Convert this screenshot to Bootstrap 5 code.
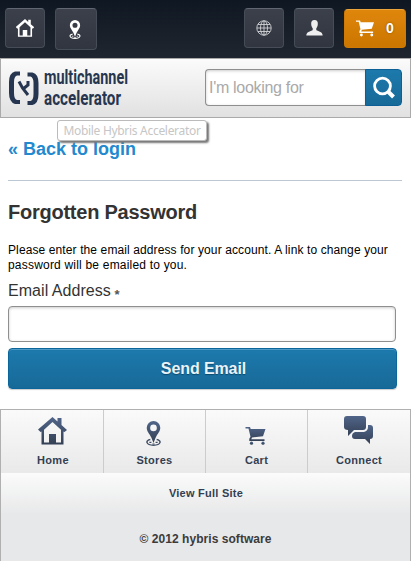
<!DOCTYPE html>
<html lang="en">
<head>
<meta charset="utf-8">
<meta name="viewport" content="width=device-width, initial-scale=1">
<title>Forgotten Password</title>
<link href="https://cdn.jsdelivr.net/npm/bootstrap@5.3.0/dist/css/bootstrap.min.css" rel="stylesheet">
<style>
body{font-family:"Liberation Sans",Arial,sans-serif;color:#333;background:#fff;height:561px;overflow:hidden}
svg{display:block;flex:none}
.topbar{height:58px;padding:8px 5px 0;background:linear-gradient(#0f1722,#20262f)}
.tools-end{gap:10px}
.tool{width:40px;height:40px;padding:0;border:1px solid #474d58;border-top-color:#626873;border-radius:4px;background:linear-gradient(#3b404b,#30353f);display:flex;align-items:center;justify-content:center}
.tool-lg{width:42px;height:42px;margin-left:10px;padding-right:2px}
.tool-cart{width:62px;height:39px;margin-top:1px;border-color:#cf7a05;border-top-color:#eda43b;background:linear-gradient(#df860c,#cb7600);color:#fff;font-weight:700;font-size:14px;gap:12px;text-shadow:0 0 2px #7a4700}
.brandbar{height:60px;border:1px solid #aaa;background:linear-gradient(#fbfbfb,#e1e1e1);padding:10px 8px 0 8px;position:relative}
.logo{overflow:visible;margin-top:-3px}
.search{width:197px;height:37px}
.search .form-control{border:1px solid #8f8f8f;border-right:0;border-radius:4px 0 0 4px;padding:0 3px;font-size:16px;letter-spacing:-.3px;box-shadow:inset 0 1px 3px #ccc}
.search .form-control::placeholder{color:#a9a9a9}
.search .btn{width:37px;padding:0 0 0 6px;border:1px solid #0c6095;border-radius:0 4px 4px 0;background:linear-gradient(#1d79ac,#176a98)}
.tip{position:absolute;left:56px;top:61px;width:150px;height:21px;border:1px solid #bbb;border-radius:3px;background:#fff;box-shadow:2px 2px 2px #777;color:#c6c6c6;font:12px/19px "Noto Sans",sans-serif;letter-spacing:-.3px;text-align:center;white-space:nowrap;z-index:2}
.back{font-size:18px;line-height:22px;font-weight:700;color:#2389cf;text-decoration:none}
.page{height:291px;padding:20px 8px 0}
.divider{border-top:1px solid #bcc7d3;margin:20px 1px 0 0;width:394px}
h1{font-size:20px;line-height:24px;font-weight:700;margin:19px 0 0;letter-spacing:-.24px}
.intro{font-size:12px;line-height:15px;color:#000;margin:19px 0 0;white-space:nowrap;letter-spacing:.11px}
.intro span{letter-spacing:.2px}
.field-label{font-size:16px;line-height:20px;margin:8px 0 0;display:block;letter-spacing:.05px}
.field-label span{font-size:13px;font-weight:700;color:#555;margin-left:-1px;position:relative;top:3px}
.email{width:388px;height:36px;margin-top:4px;padding:0 8px;border:1px solid #8f8f8f;border-radius:4px;box-shadow:inset 0 1px 3px #ccc}
.send{display:block;width:389px;height:41px;margin-top:6px;border:1px solid #0c659b;border-radius:4px;background:linear-gradient(#1d79ac,#176a98);box-shadow:inset 0 1px #4d9bc6,0 1px 1px #ccc;color:#e9f3f8;font-weight:700;font-size:16px;line-height:20px;letter-spacing:-.1px;padding:0 0 0 2px;text-shadow:0 1px 1px #0c496c}
.foot{height:152px;border:1px solid #b0b0b0;border-bottom:0;background:#e7e8ea;font-size:11px;font-weight:700}
.foot-tabs{height:63px;background:linear-gradient(#fafafa,#e9e9e9)}
.foot-tabs a{flex:0 0 102px;border-right:1px solid #ccc;color:#333f52;text-decoration:none;letter-spacing:.3px}
.foot-tabs a:first-child{flex-basis:103px;padding-left:2px}
.foot-tabs a:last-child{border-right:0}
.pic{height:43px;display:flex;justify-content:center;padding-top:5px}
.pic-left{padding-right:2px}
.foot-tabs small{font-size:11px;line-height:15px}
.full{height:40px;line-height:40px;background:linear-gradient(#fbfbfb,#e8e9ea);color:#333f52;letter-spacing:.25px;padding-left:1px}
.copy{line-height:16px;padding-top:18px;font-size:12px;letter-spacing:.05px;color:#3b3b3b}
</style>
<script src="https://cdn.jsdelivr.net/npm/bootstrap@5.3.0/dist/js/bootstrap.bundle.min.js"></script>
</head>
<body>
<svg width="0" height="0" class="position-absolute" aria-hidden="true">
<defs>
<linearGradient id="ink" x1="0" y1="0" x2="0" y2="1"><stop offset="0" stop-color="#50658a"/><stop offset="1" stop-color="#344054"/></linearGradient>
<symbol id="house" viewBox="0 0 28 28"><path fill-rule="evenodd" d="M14 0L19 4.500V1H23V8L28.500 13L26 15L25 14.500V27.500H3V14.500L2 15L-.5 12.500ZM14 5L5.500 12.800V25.500H10.500V17H17.500V25.500H22.500V12.800Z"/></symbol>
<symbol id="pin" viewBox="0 0 14 24"><path fill-rule="evenodd" d="M7 0A6.500 6.500 0 0 0 .5 6.500C.5 10 3 12 5 16L7 21L9 16C11 12 13.500 10 13.500 6.500A6.500 6.500 0 0 0 7 0ZM7 3.400A3.200 3.200 0 1 1 7 9.800A3.200 3.200 0 0 1 7 3.400Z"/><path d="M4 17.800C-1 18.500-.5 23.200 7 23.200S15 18.500 10 17.800" fill="none" stroke="currentColor" stroke-width="1.400"/><path d="M3 20.500H5M9 20.500H11M6 22H8" stroke="currentColor"/></symbol>
<symbol id="trolley" viewBox="0 0 20 18"><path d="M0 0H4.500L5.200 2H20L17.500 9.300L6.500 10.500L5.800 12.300H19V14H3.800V11.800L5 9.800L3 1.600H0Z"/><circle cx="6" cy="16.200" r="1.600"/><circle cx="17.500" cy="16.200" r="1.600"/></symbol>
</defs></svg>
<header class="topbar d-flex align-items-start">
<a class="tool" href="#" aria-label="Home"><svg width="18" height="18" fill="#fff"><use href="#house"/></svg></a>
<a class="tool tool-lg" href="#" aria-label="Stores"><svg width="12" height="19" fill="#fff" color="#fff"><use href="#pin"/></svg></a>
<div class="tools-end d-flex ms-auto">
<a class="tool" href="#" aria-label="Language"><svg width="16" height="16" viewBox="0 0 16 16" fill="none" stroke="#d0d1d4" stroke-width=".9"><circle cx="8" cy="8" r="7.200"/><ellipse cx="8" cy="8" rx="3.500" ry="7.200"/><path d="M8 1V15M1 8H15M2 4.500H14M2 11.500H14"/></svg></a>
<a class="tool" href="#" aria-label="Account"><svg width="17" height="16" viewBox="0 0 17 16" fill="#eee"><path d="M8.500 0C5.800 0 5 2 5.200 4.200C5.300 6.500 6.200 7.500 6.700 8.300V10C5.500 11.200 .4 11.500 .3 15.500H16.700C16.600 11.500 11.500 11.200 10.300 10V8.300C10.800 7.500 11.700 6.500 11.800 4.200C12 2 11.200 0 8.500 0Z"/></svg></a>
<a class="tool tool-cart text-decoration-none" href="#"><svg width="18" height="17" fill="#fff"><use href="#trolley"/></svg><span>0</span></a>
</div>
</header>
<div class="brandbar d-flex justify-content-between">
<a href="#" aria-label="multichannel accelerator"><svg class="logo" width="124" height="46" viewBox="0 -3 124 46" fill="#263650"><path d="M11 2.500H6Q0 4 0 13V24Q0 33 6 35H11V31H8Q5 30 5 24V13Q5 7.500 8 6.500H11Z"/><path d="M18.500 3.500H23.500Q29.500 5 29.500 14V25Q29.500 34.500 23.500 36H18.500V32H21.500Q24.500 31 24.500 25V14Q24.500 8.500 21.500 7.500H18.500Z"/><path d="M10 12.500L13.500 19L19 26M19 12V16L14 20" fill="none" stroke="#263650" stroke-width="3"/><g font-family="Roboto, sans-serif" font-weight="700" font-size="20"><text x="35" y="14.800" textLength="84" lengthAdjust="spacingAndGlyphs">multichannel</text><text x="35" y="35.800" textLength="77" lengthAdjust="spacingAndGlyphs">accelerator</text></g></svg></a>
<form class="search input-group flex-nowrap"><input class="form-control" placeholder="I'm looking for" aria-label="Search"><button type="button" class="btn" aria-label="Search"><svg width="24" height="24" viewBox="0 0 24 24" fill="none" stroke="#fff"><circle cx="10.500" cy="10" r="7.900" stroke-width="2.800"/><path d="M16 15.500L21.500 21" stroke-width="4"/></svg></button></form>
<div class="tip" role="tooltip">Mobile Hybris Accelerator</div>
</div>
<main class="page">
<a class="back d-block" href="#">« Back to login</a>
<div class="divider"></div>
<h1>Forgotten Password</h1>
<p class="intro">Please enter the email address for your account. A link to change your<br><span>password will be emailed to you.</span></p>
<label class="field-label" for="email">Email Address <span>*</span></label>
<input class="email d-block" id="email" type="email">
<button class="send btn" type="button">Send Email</button>
</main>
<footer class="foot text-center">
<nav class="foot-tabs d-flex" aria-label="Footer">
<a href="#"><div class="pic"><svg width="30" height="32" viewBox="0 0 30 32" fill="url(#ink)"><use href="#house" width="29" height="28" y="2"/></svg></div><small class="d-block fw-bold">Home</small></a>
<a href="#"><div class="pic pic-left"><svg width="15" height="32" fill="url(#ink)" color="#435067"><use href="#pin" width="15" height="25" y="6"/></svg></div><small class="d-block fw-bold">Stores</small></a>
<a href="#"><div class="pic pic-left"><svg width="21" height="32" fill="url(#ink)"><use href="#trolley" width="21" height="18" y="12"/></svg></div><small class="d-block fw-bold">Cart</small></a>
<a href="#"><div class="pic pic-left"><svg width="31" height="32" viewBox="0 0 31 32" fill="url(#ink)"><path d="M4 1H20Q23 1 23 4V12Q23 15 20 15H11L5 21V15Q1 15 1 12V4Q1 1 4 1Z"/><path d="M25 10H27Q30 10 30 13V21Q30 24 27 24V29L22 24H12Q9 24 9 21Q9 18 12 17H21Q25 16 25 12Z"/></svg></div><small class="d-block fw-bold">Connect</small></a>
</nav>
<div class="full">View Full Site</div>
<div class="copy">© 2012 hybris software</div>
</footer>
</body>
</html>
